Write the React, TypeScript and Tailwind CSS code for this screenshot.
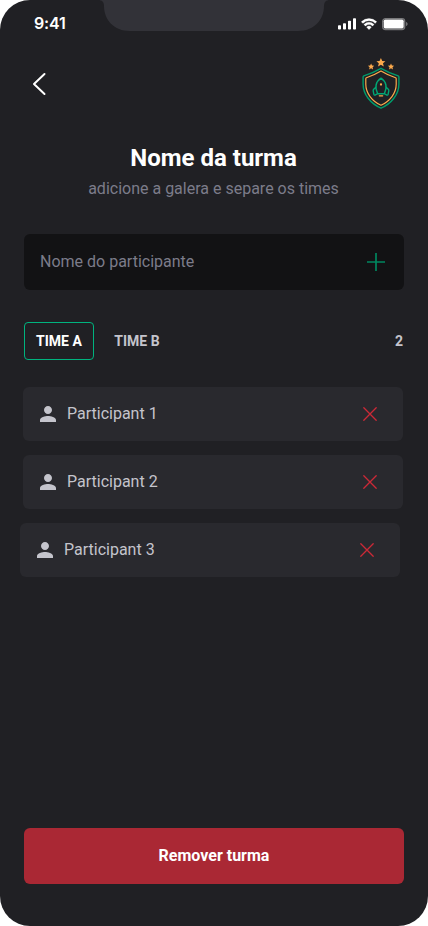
import React from "react";

const star = "M0 -4.6 L1.35 -1.6 L4.5 -1.35 L2.1 .8 L2.85 4 L0 2.3 L-2.85 4 L-2.1 .8 L-4.5 -1.35 L-1.35 -1.6 Z";

function StatusBar() {
  return (
    <header className="relative flex h-12 shrink-0 items-start justify-between pl-[34px] pr-[20px]">
      <svg className="absolute left-[98px] top-0" width="232" height="31" viewBox="0 0 232 31">
        <path d="M0 0C4 0 6 2 6 6C6 20 16 31 32 31H200C216 31 226 20 226 6C226 2 228 0 232 0Z" fill="#323238" />
      </svg>
      <span className="relative mt-[11px] font-['Inter'] text-[16px] font-semibold leading-6 tracking-[-0.2px]">9:41</span>
      <svg className="relative mt-[16px]" width="71" height="16" viewBox="0 0 71 16" fill="#fff">
        <rect x="1" y="9.2" width="3" height="4.4" rx=".8" />
        <rect x="6" y="7.2" width="3" height="6.4" rx=".8" />
        <rect x="11" y="4.8" width="3" height="8.8" rx=".8" />
        <rect x="16" y="2.3" width="3" height="11.3" rx=".8" />
        <path d="M32 4.8c2.2 0 4.3.8 5.900 2.400.1.1.3.1.4 0l1.200-1.200c.1-.1.1-.3 0-.4a10.700 10.700 0 0 0-15 0c-.1.1-.1.3 0 .4L25.700 7.200c.1.1.3.1.4 0A8.700 8.700 0 0 1 32 4.800Zm0 3.800c1.200 0 2.400.5 3.300 1.300.1.1.3.1.4 0l1.200-1.200c.1-.1.1-.3 0-.4a7 7 0 0 0-9.800 0c-.1.1-.1.3 0 .4l1.200 1.200c.1.1.3.1.4 0A4.800 4.800 0 0 1 32 8.600Zm2.300 2.700c.1-.1.1-.3 0-.4a3.600 3.600 0 0 0-4.600 0c-.1.1-.1.3 0 .4l2.100 2.100c.1.1.3.1.4 0Z" stroke="#fff" strokeWidth=".3" />
        <rect x="45.700" y="2.600" width="22" height="10.900" rx="2.800" fill="none" stroke="#fff" strokeOpacity=".4" strokeWidth="1.300" />
        <rect x="46.700" y="3.600" width="20" height="8.900" rx="1.700" />
        <path d="M69.200 6v4c.8-.4 1.300-1.100 1.300-2S70 6.400 69.200 6Z" opacity=".45" />
      </svg>
    </header>
  );
}

function Crest() {
  return (
    <svg width="40" height="54" viewBox="0 0 40 54" fill="none" strokeLinejoin="round" strokeLinecap="round">
      <g fill="#FBA94C">
        <path d={star} transform="translate(20.900 6.500)" />
        <path d={star} transform="translate(11.100 10.600) scale(.7)" />
        <path d={star} transform="translate(31 10.600) scale(.7)" />
      </g>
      <path d="M21 12.300C15.500 15.500 9.500 18 3.800 19.800C3.300 20 3.100 20.300 3.100 20.900V28C3.100 38.500 10.500 47.500 21 52.200C31.500 47.500 38.900 38.500 38.900 28V20.900C38.900 20.300 38.700 20 38.200 19.800C32.500 18 26.500 15.500 21 12.300Z" stroke="#009B6C" strokeWidth="1.400" />
      <path d="M21 15C16 18 11 20.300 6.400 21.800C5.900 22 5.800 22.200 5.800 22.700V28.300C5.800 37.300 12 45 21 49.300C30 45 36.200 37.300 36.200 28.300V22.700C36.200 22.200 36.100 22 35.600 21.800C31 20.300 26 18 21 15Z" stroke="#FBA94C" strokeWidth="1.200" />
      <path d="M17.700 37.700H24.300C27 32 26.900 26.200 21 22.200C15.100 26.200 15 32 17.700 37.700ZM16.100 31L13.700 33.300C13.200 33.800 13.100 34.200 13.200 34.800L13.900 38.300C14.100 39.200 14.800 39.400 15.500 38.900L17.700 37.700M25.900 31L28.300 33.300C28.800 33.800 28.900 34.200 28.800 34.800L28.100 38.300C27.900 39.200 27.200 39.400 26.500 38.900L24.300 37.700" stroke="#00A674" strokeWidth="1.400" />
      <circle cx="21" cy="28.500" r="1.150" fill="#FBA94C" />
      <path d="M19.300 39.800H22.700" stroke="#FBA94C" strokeWidth="1.200" />
    </svg>
  );
}

function Participant({ name, shifted = false }: { name: string; shifted?: boolean }) {
  return (
    <li className={`flex h-[54px] w-[380px] items-center rounded-md bg-[#29292E] pl-[13px] pr-[23px] ${shifted ? "-ml-1" : "-ml-px"}`}>
      <svg width="24" height="24" viewBox="0 0 24 24" fill="#C4C4CC">
        <path d="M12 12c2.210 0 4-1.790 4-4s-1.790-4-4-4-4 1.790-4 4 1.790 4 4 4zm0 2c-2.670 0-8 1.340-8 4v2h16v-2c0-2.660-5.330-4-8-4z" />
      </svg>
      <span className="ml-[7px] flex-1 text-base leading-6 text-[#C4C4CC]">{name}</span>
      <button aria-label={`Remover ${name}`}>
        <svg width="20" height="20" viewBox="0 0 20 20" fill="none" stroke="#CC2937" strokeWidth="1.300" strokeLinecap="round">
          <path d="M3.800 3.800l12.400 12.400M16.200 3.800L3.800 16.200" />
        </svg>
      </button>
    </li>
  );
}

export default function App() {
  return (
    <div className="bg-white">
      <main className="flex h-[926px] w-[428px] flex-col overflow-hidden rounded-[30px] bg-[#202024] font-['Roboto',sans-serif] text-white">
        <StatusBar />
        <div className="flex flex-1 flex-col px-6 pb-[42px]">
          <div className="flex h-[72px] items-center justify-between">
            <button aria-label="Voltar">
              <svg width="32" height="32" viewBox="0 0 32 32" fill="none" stroke="#fff" strokeWidth="2" strokeLinecap="round" strokeLinejoin="round">
                <path d="M20.500 6L10 16l10.500 10" />
              </svg>
            </button>
            <div className="mb-[2px] pr-1"><Crest /></div>
          </div>
          <h1 className="-ml-px mt-[22px] text-center text-2xl font-bold leading-8">Nome da turma</h1>
          <p className="-ml-px mt-[3px] text-center text-base leading-6 text-[#7C7C8A]">adicione a galera e separe os times</p>
          <div className="mt-[33px] flex h-14 shrink-0 items-center justify-between rounded-md bg-[#121214] px-4">
            <span className="text-base text-[#7C7C8A]">Nome do participante</span>
            <svg width="24" height="24" viewBox="0 0 24 24" fill="none" stroke="#00875F" strokeWidth="1.700">
              <path d="M3 12h18M12 3v18" />
            </svg>
          </div>
          <div className="mt-8 flex h-[38px] items-center text-sm font-bold">
            <button className="h-[38px] w-[70px] rounded border border-[#00B37E]">TIME A</button>
            <button className="ml-3 h-[38px] w-[62px] text-[#C4C4CC]">TIME B</button>
            <span className="ml-auto mr-px text-[#C4C4CC]">2</span>
          </div>
          <ul className="mt-[27px] flex flex-col gap-[14px]">
            <Participant name="Participant 1" />
            <Participant name="Participant 2" />
            <Participant name="Participant 3" shifted />
          </ul>
          <button className="mt-auto h-14 shrink-0 rounded-md bg-[#AA2834] text-base font-bold">Remover turma</button>
        </div>
      </main>
    </div>
  );
}
